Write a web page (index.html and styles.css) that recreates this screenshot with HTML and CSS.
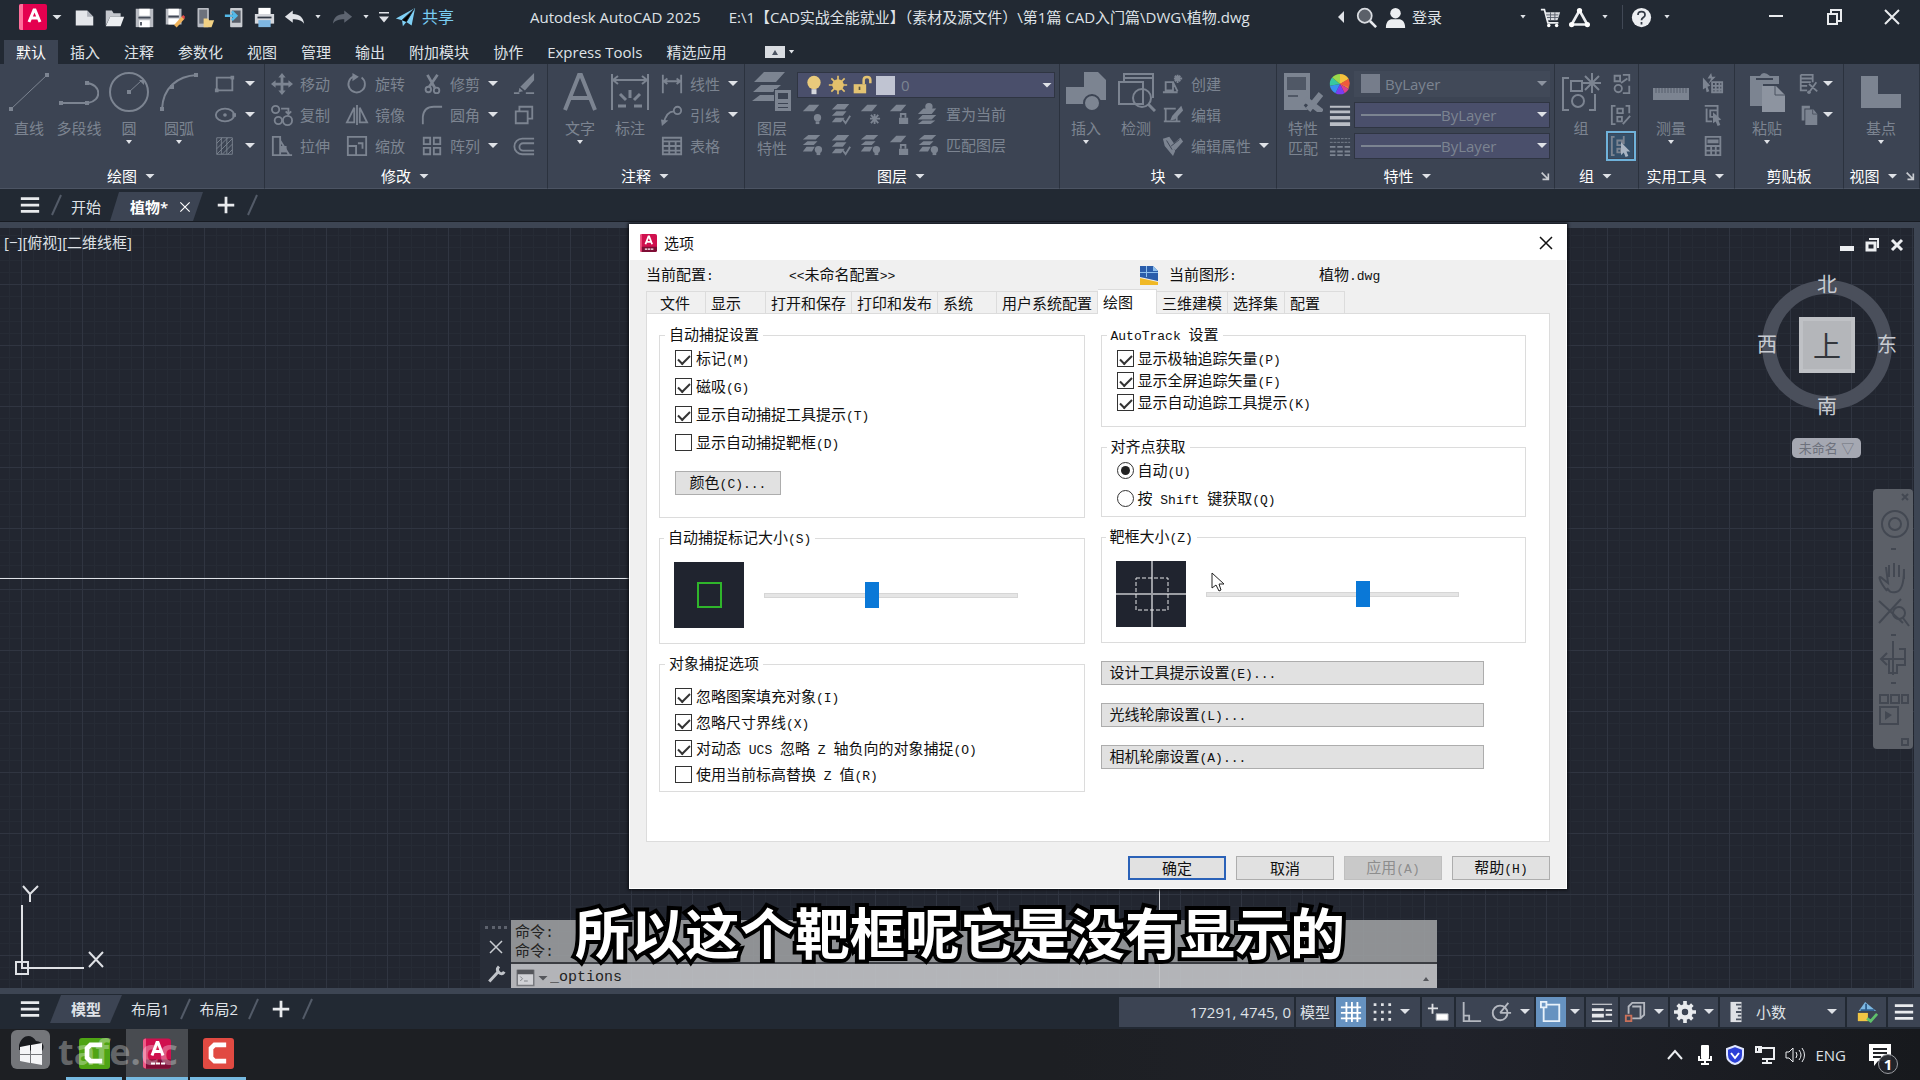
FILE: index.html
```html
<!DOCTYPE html>
<html lang="zh-CN">
<head>
<meta charset="utf-8">
<title>Autodesk AutoCAD 2025</title>
<link rel="stylesheet" href="styles.css">
</head>
<body>
<svg class="defs" aria-hidden="true">
  <defs>
    <symbol id="new" viewBox="0 0 24 24"><path fill="#e4e6ea" d="M2 4h13l7 7v10H2z"/><path fill="#aeb2ba" d="M15 4v7h7z"/></symbol>
    <symbol id="open" viewBox="0 0 24 24"><path fill="#c4c7cd" d="M2 21V4h7l2 3h8v4H7z"/><path fill="#eceef1" d="M7 11h16l-4 11H2z"/></symbol>
    <symbol id="save" viewBox="0 0 24 24"><path fill="#b9bcc3" d="M2 2h20v21H2z"/><path fill="#fff" d="M6 2h12v8H6zM6 15h12v8H6z"/><path stroke="#444b57" stroke-width="2" d="M5 12h14M8 17v4"/></symbol>
    <symbol id="saveas" viewBox="0 0 24 24"><path fill="#b9bcc3" d="M2 2h18v18H2z"/><path fill="#fff" d="M5 2h12v7H5zM5 13h12v7H5z"/><path stroke="#444b57" stroke-width="2" d="M5 11h12"/><path stroke="#f0b35a" stroke-width="4" d="M13 22l9-10"/><path fill="#e64a4a" d="M20 11l3 3 1-3-2-2z"/></symbol>
    <symbol id="mobopen" viewBox="0 0 24 24"><rect x="4" y="1" width="13" height="22" rx="1" fill="#b9bcc3"/><path fill="#6d727c" d="M6 3h9v16H6z"/><path fill="#f2d184" d="M11 13h5l1 2h6l-3 8h-9z"/></symbol>
    <symbol id="mobsave" viewBox="0 0 24 24"><rect x="7" y="1" width="14" height="22" rx="1" fill="#c9ccd1"/><path fill="#585e69" d="M9 4h10v14H9z"/><path stroke="#54b9e8" stroke-width="3" fill="none" d="M1 10h11M9 5l5 5-5 5"/></symbol>
    <symbol id="print" viewBox="0 0 24 24"><path fill="#fff" d="M5 1h14v7H5z"/><path fill="#d5d7dc" d="M1 8h22v11H1z"/><path fill="#7fb7e2" d="M5 15h14v8H5z"/><path stroke="#333a46" stroke-width="2" d="M4 12h16"/></symbol>
    <symbol id="undo" viewBox="0 0 24 24"><path fill="currentColor" d="M1 11l9-7v4c8 0 12 4 13 11-3-4-7-5-13-5v4z"/></symbol>
    <symbol id="redo" viewBox="0 0 24 24"><path fill="currentColor" d="M23 11l-9-7v4C6 8 2 12 1 19c3-4 7-5 13-5v4z"/></symbol>
    <symbol id="plane" viewBox="0 0 24 24"><path fill="#7fd0f5" d="M1 13L23 1l-4 20-6-4-4 5-1-7z"/><path stroke="#222933" d="M8 15L22 2 13 17"/></symbol>
    <symbol id="search" viewBox="0 0 24 24"><circle cx="10" cy="10" r="8" fill="#5b6069" stroke="#d9dce1" stroke-width="2"/><path stroke="#e9ebee" stroke-width="3" d="M16 16l7 7"/></symbol>
    <symbol id="user" viewBox="0 0 24 24"><circle cx="12" cy="7" r="6" fill="#eceef1"/><path fill="#eceef1" d="M1 24c0-8 4-10 7-10h8c3 0 7 2 7 10z"/></symbol>
    <symbol id="cart" viewBox="0 0 24 24"><path fill="#d9dce1" d="M6 6h17l-3 9H9z"/><path fill="none" stroke="#eceef1" stroke-width="2" d="M1 3h4l4 15h12"/><circle cx="10" cy="21" r="2" fill="#fff"/><circle cx="19" cy="21" r="2" fill="#fff"/><path stroke="#525966" d="M7 9h14M8 12h13M12 6v9M17 6v9"/></symbol>
    <symbol id="tri" viewBox="0 0 24 24"><path fill="none" stroke="#eceef1" stroke-width="3" stroke-linejoin="round" d="M12 4L3 20h18z"/><circle cx="12" cy="4" r="3" fill="#fff"/><circle cx="3" cy="20" r="3" fill="#fff"/><circle cx="21" cy="20" r="3" fill="#fff"/></symbol>
    <symbol id="help" viewBox="0 0 24 24"><circle cx="12" cy="12" r="11" fill="#eceef1"/><path fill="none" stroke="#333a46" stroke-width="2" d="M8 9c0-5 8-5 8 0 0 3-4 3-4 6M12 17v3"/></symbol>
    <symbol id="burger" viewBox="0 0 24 24"><path stroke="#e9ebee" stroke-width="3" d="M2 5h20M2 12h20M2 19h20"/></symbol>
    <symbol id="plus" viewBox="0 0 24 24"><path stroke="#e9ebee" stroke-width="3" d="M3 12h18M12 3v18"/></symbol>
    <symbol id="cross" viewBox="0 0 24 24"><path stroke="currentColor" stroke-width="2" d="M4 4l16 16M20 4L4 20"/></symbol>
    <symbol id="slash" viewBox="0 0 12 24"><path stroke="#535b68" stroke-width="2" d="M11 2L2 22"/></symbol>
    <symbol id="launch" viewBox="0 0 12 12"><path fill="none" stroke="#c9ccd1" stroke-width="2" d="M2 2l7 7M3 10h7V3"/></symbol>

    <symbol id="line" viewBox="0 0 40 40"><path stroke="currentColor" d="M2 37L38 3"/><path fill="currentColor" d="M0 35h4v4H0zM36 1h4v4h-4z"/></symbol>
    <symbol id="pline" viewBox="0 0 40 40"><path fill="none" stroke="currentColor" stroke-width="2" d="M1 31h28M27 11c16 1 16 18 2 20"/><path fill="currentColor" d="M0 29h4v4H0zM26 29h4v4h-4zM26 9h4v4h-4z"/></symbol>
    <symbol id="circle" viewBox="0 0 40 40"><circle cx="20" cy="20" r="19" fill="none" stroke="currentColor" stroke-width="2"/><path stroke="currentColor" d="M20 20L32 9"/><path fill="currentColor" d="M18 18h4v4h-4zM30 8h5v5z"/></symbol>
    <symbol id="arc" viewBox="0 0 40 40"><path fill="none" stroke="currentColor" stroke-width="2" d="M3 37C4 16 18 4 38 3"/><path fill="currentColor" d="M1 35h4v4H1zM11 13h4v4h-4zM35 1h4v4h-4z"/></symbol>
    <symbol id="rect" viewBox="0 0 24 24"><path fill="none" stroke="currentColor" stroke-width="2" d="M3 5h17v14H3z"/><path fill="currentColor" d="M1 17h4v4H1zM18 3h4v4h-4z"/></symbol>
    <symbol id="ellipse" viewBox="0 0 24 24"><ellipse cx="12" cy="12" rx="10" ry="7" fill="none" stroke="currentColor" stroke-width="2"/><circle cx="12" cy="12" r="2" fill="currentColor"/><path fill="currentColor" d="M20 10h4v4h-4z"/></symbol>
    <symbol id="hatch" viewBox="0 0 24 24"><path fill="none" stroke="currentColor" d="M3 3h17v18H3zM3 9l6-6M3 15L15 3M3 21L20 4M9 21l11-11M15 21l5-5M8 3v18M14 3v18"/></symbol>
    <symbol id="move" viewBox="0 0 24 24"><path fill="none" stroke="currentColor" stroke-width="3" d="M12 3v18M3 12h18"/><path fill="currentColor" d="M12 0l4 5H8zM12 24l4-5H8zM0 12l5-4v8zM24 12l-5-4v8z"/></symbol>
    <symbol id="rotate" viewBox="0 0 24 24"><path fill="none" stroke="currentColor" stroke-width="2" d="M17 5a9 9 0 1 1-9-1"/><path fill="currentColor" d="M7 0l7 4-7 5z"/></symbol>
    <symbol id="trim" viewBox="0 0 24 24"><path stroke="currentColor" stroke-width="3" d="M7 2l8 14M18 2L9 15"/><g fill="none" stroke="currentColor" stroke-width="2"><circle cx="8" cy="18" r="3"/><circle cx="17" cy="19" r="3"/></g></symbol>
    <symbol id="erase" viewBox="0 0 24 24"><path fill="currentColor" d="M23 0v8L13 19l-5-4zM7 16l4 4-5 1z"/><path stroke="currentColor" stroke-width="2" d="M1 22h6M14 22h9"/></symbol>
    <symbol id="copy" viewBox="0 0 24 24"><g fill="none" stroke="currentColor" stroke-width="2"><circle cx="5" cy="6" r="4"/><circle cx="8" cy="18" r="4"/><circle cx="18" cy="18" r="5"/><path d="M11 5h8v6M16 8l3 3 3-3"/></g></symbol>
    <symbol id="mirror" viewBox="0 0 24 24"><path fill="none" stroke="currentColor" stroke-width="2" d="M9 4L1 20h8zM15 4l8 16h-8zM12 1v22"/></symbol>
    <symbol id="fillet" viewBox="0 0 24 24"><path fill="none" stroke="currentColor" stroke-width="2" d="M2 22V14Q3 3 14 3h9"/></symbol>
    <symbol id="box" viewBox="0 0 24 24"><path fill="none" stroke="currentColor" stroke-width="2" d="M3 8h13v13H3zM7 8V3h14v13h-5"/></symbol>
    <symbol id="stretch" viewBox="0 0 24 24"><path fill="none" stroke="currentColor" stroke-width="2" d="M2 2h8v20H2zM10 6l10 16H10M2 22h21"/><path fill="currentColor" d="M10 12h7v7h-7z"/></symbol>
    <symbol id="scale" viewBox="0 0 24 24"><path fill="none" stroke="currentColor" stroke-width="2" d="M2 2h20v20H2zM2 12h9v10M13 9h5v6"/></symbol>
    <symbol id="array" viewBox="0 0 24 24"><path fill="none" stroke="currentColor" stroke-width="2" d="M3 3h7v7H3zM14 3h7v7h-7zM3 14h7v7H3zM14 14h7v7h-7z"/></symbol>
    <symbol id="offset" viewBox="0 0 24 24"><path fill="none" stroke="currentColor" stroke-width="2" d="M23 4H10a8 8 0 0 0 0 17h13M23 9H11a4 4 0 0 0 0 8h12"/></symbol>
    <symbol id="text" viewBox="0 0 40 40"><path fill="none" stroke="currentColor" stroke-width="4" d="M5 38L19 3h2l14 35M10 26h20"/></symbol>
    <symbol id="dim" viewBox="0 0 40 40"><path fill="none" stroke="currentColor" stroke-width="2" d="M2 2v36M38 2v36M3 8h34M8 4L3 8l5 4M32 4l5 4-5 4"/><path stroke="currentColor" stroke-width="3" d="M20 18v8M10 22l6 6M30 22l-6 6M8 34h8M24 34h8"/></symbol>
    <symbol id="linear" viewBox="0 0 24 24"><path fill="none" stroke="currentColor" stroke-width="2" d="M2 2v20M22 2v20M3 9h18M7 6L3 9l4 3M17 6l4 3-4 3"/></symbol>
    <symbol id="leader" viewBox="0 0 24 24"><g fill="none" stroke="currentColor" stroke-width="2"><path d="M3 21C5 12 8 8 14 8"/><circle cx="18" cy="7" r="4"/></g><path fill="currentColor" d="M0 17l8 1-7 6z"/></symbol>
    <symbol id="table" viewBox="0 0 24 24"><path fill="none" stroke="currentColor" stroke-width="2" d="M2 3h20v18H2zM2 7h20M2 12h20M2 17h20M9 7v14M16 7v14"/></symbol>
    <symbol id="layers" viewBox="0 0 40 40"><path fill="currentColor" d="M12 0h21l-9 10H2zM9 13h20l-8 7H1zM8 23h16v6H0z"/><path fill="#3c4453" d="M22 17h18v23H22z"/><path fill="currentColor" d="M23 18h16v21H23z"/><path fill="#3c4453" d="M26 21h10v6H26zM26 31h10v1H26zM26 35h10v1H26z"/></symbol>
    <symbol id="ly1" viewBox="0 0 24 24"><path fill="currentColor" d="M9 2h11l-6 7H2z"/><circle cx="18" cy="16" r="4" fill="currentColor"/><path fill="currentColor" d="M16 20h4v3h-4z"/></symbol>
    <symbol id="ly2" viewBox="0 0 24 24"><path fill="currentColor" d="M8 1h13l-5 6H2zM7 9h11l-4 5H2zM6 16h10l-4 5H2z"/><path fill="none" stroke="currentColor" stroke-width="2" d="M14 18l3 4 5-8"/></symbol>
    <symbol id="ly3" viewBox="0 0 24 24"><path fill="currentColor" d="M9 2h11l-6 7H2z"/><path stroke="currentColor" stroke-width="2" d="M17 12v11M12 17h11M13 13l8 9M21 13l-8 9"/></symbol>
    <symbol id="ly4" viewBox="0 0 24 24"><path fill="currentColor" d="M9 2h11l-6 7H2zM12 16h10v7H12z"/><path fill="none" stroke="currentColor" stroke-width="2" d="M14 16v-4h5v4"/></symbol>
    <symbol id="ly5" viewBox="0 0 24 24"><path fill="currentColor" d="M7 6h14l-5 6H1zM6 13h15l-5 5H1zM6 19h14l-5 4H1z"/><circle cx="13" cy="4" r="4" fill="currentColor"/></symbol>
    <symbol id="ly6" viewBox="0 0 24 24"><path fill="currentColor" d="M8 1h13l-5 5H2zM7 8h11l-4 4H2zM6 14h9l-3 5H2z"/><circle cx="19" cy="17" r="4" fill="currentColor"/><path fill="currentColor" d="M17 20h4v3h-4z"/></symbol>
    <symbol id="insert" viewBox="0 0 40 40"><path fill="currentColor" d="M18 0h14l8 8v20H18zM0 15h26v17H0z"/><circle cx="26" cy="31" r="8" fill="#7d8592" stroke="#3c4453" stroke-width="2"/></symbol>
    <symbol id="detect" viewBox="0 0 40 40"><path fill="none" stroke="currentColor" stroke-width="2" d="M8 9V2h29v24M3 10h24v22H3zM8 6h29"/><circle cx="26" cy="26" r="9" fill="none" stroke="currentColor" stroke-width="2"/><path stroke="currentColor" stroke-width="3" d="M32 32l7 7"/></symbol>
    <symbol id="create" viewBox="0 0 24 24"><path fill="none" stroke="currentColor" stroke-width="2" d="M4 10h8v9H4zM1 21h16M12 10l5 10M17 2v9M13 6h9M14 3l6 6M20 3l-6 6"/></symbol>
    <symbol id="edit" viewBox="0 0 24 24"><path fill="none" stroke="currentColor" stroke-width="2" d="M2 5h13M4 5v14M2 19h18M16 12v7"/><path fill="currentColor" d="M21 2l2 5-9 10-5 1 2-5z"/></symbol>
    <symbol id="attr" viewBox="0 0 24 24"><path fill="currentColor" d="M1 4l7-2 5 7 7-6 3 4-8 9-3 7-9-11z"/><path stroke="#3c4453" d="M5 6l6 10M10 12l9-7M14 16l5 6"/></symbol>
    <symbol id="match" viewBox="0 0 40 40"><path fill="currentColor" d="M1 1h26v37H1z"/><path fill="#505866" d="M4 5h19v13H4zM5 23h10v2H5z"/><path stroke="#3c4453" stroke-width="7" d="M23 36l16-14"/><path stroke="currentColor" stroke-width="6" d="M22 27l17 13M25 38l13-16"/></symbol>
    <symbol id="wheel" viewBox="0 0 24 24"><path fill="#f6c23c" d="M12 12L12 1A11 11 0 0 1 21.500 6.500z"/><path fill="#ef7a3a" d="M12 12L21.500 6.500V17.500z"/><path fill="#dc3f8e" d="M12 12L21.500 17.500A11 11 0 0 1 17 22z"/><path fill="#7a3df0" d="M12 12L17 22A11 11 0 0 1 7 22z"/><path fill="#3a8ff0" d="M12 12L7 22A11 11 0 0 1 1 14z"/><path fill="#38c8a0" d="M12 12L1 14A11 11 0 0 1 3.500 5z"/><path fill="#9bd84a" d="M12 12L3.500 5A11 11 0 0 1 12 1z"/><path fill="#ee5a3c" d="M12 12L21.500 6.500A11 11 0 0 1 22 15z"/></symbol>
    <symbol id="lw" viewBox="0 0 24 24"><path fill="#b9bdc5" d="M1 2h22v2H1zM1 7h22v3H1zM1 13h22v4H1zM1 20h22v4H1z"/></symbol>
    <symbol id="lt" viewBox="0 0 24 24"><path stroke="currentColor" d="M1 4h22M1 8h22" stroke-dasharray="3 1"/><path stroke="currentColor" stroke-width="2" d="M1 13h22M1 18h22M1 22h22" stroke-dasharray="6 2"/></symbol>
    <symbol id="group" viewBox="0 0 40 40"><g fill="none" stroke="currentColor" stroke-width="2"><path d="M8 6H2v32h6M28 38h6V22M10 9h11v10H10z"/><circle cx="17" cy="29" r="6"/><path d="M31 1v20M21 11h19M24 4l14 14M38 4L24 18"/></g></symbol>
    <symbol id="ungroup" viewBox="0 0 24 24"><g fill="none" stroke="currentColor" stroke-width="2"><path d="M14 2h7v7M21 14v8h-7M5 3h6v6H5z"/><circle cx="9" cy="17" r="4"/><path d="M12 11l7-5"/></g></symbol>
    <symbol id="grpedit" viewBox="0 0 24 24"><path fill="none" stroke="currentColor" stroke-width="2" d="M6 2H2v20h4M17 2h4v8M8 5h6v5H8zM8 14h5v5H8zM14 22l8-9"/></symbol>
    <symbol id="grpsel" viewBox="0 0 24 24"><path fill="none" stroke="currentColor" stroke-width="2" d="M5 2H2v20h3M8 6h5v5H8zM8 15h4v4H8zM15 1v9"/><path fill="#a9b4c2" d="M12 8l10 10h-4l2 5-3 1-2-5-3 3z"/></symbol>
    <symbol id="measure" viewBox="0 0 40 40"><path fill="currentColor" d="M2 16h36v12H2z"/><path stroke="#565e6c" d="M5 16v5M8 16v5M11 16v5M14 16v5M17 16v5M20 16v5M23 16v5M26 16v5M29 16v5M32 16v5M35 16v5"/></symbol>
    <symbol id="qselect" viewBox="0 0 24 24"><path fill="currentColor" d="M1 5l8 9-3 1 2 5-3 1-1-5-3 2zM10 0L6 6h4l-3 6 8-8h-4z"/><path fill="none" stroke="currentColor" stroke-width="2" d="M11 10h11v11H11zM11 14h11M11 18h11M15 10v11M19 10v11"/></symbol>
    <symbol id="selall" viewBox="0 0 24 24"><path fill="none" stroke="currentColor" stroke-width="2" d="M3 2h14v9M5 5v14h6M9 7h8v7H9z"/><path fill="currentColor" d="M12 9l9 8-3 1 2 5-3 1-2-5-3 2z"/></symbol>
    <symbol id="calc" viewBox="0 0 24 24"><path fill="none" stroke="currentColor" stroke-width="2" d="M4 2h16v20H4zM7 6h10v2H7zM4 12h16M4 17h16M10 12v10M15 12v10"/></symbol>
    <symbol id="paste" viewBox="0 0 40 40"><path fill="currentColor" d="M3 4h10q3-6 10 0h9v8H16v22H3z"/><path fill="#3c4453" d="M9 6h17v2H9z"/><path fill="#8d94a0" d="M15 14h14l9 9v17H15z"/><path stroke="#4b5361" fill="none" d="M28 14v9h10"/></symbol>
    <symbol id="cut" viewBox="0 0 24 24"><path fill="none" stroke="currentColor" stroke-width="2" d="M3 2h13v8M3 2v17h7M3 6h13M3 10h11M3 14h7M12 12l9 8M20 10l-7 10"/><circle cx="12" cy="21" r="2" fill="currentColor"/></symbol>
    <symbol id="copyclip" viewBox="0 0 24 24"><path fill="currentColor" d="M4 2h9v3H7v13H4zM8 6h9l4 5v12H8z"/><path fill="none" stroke="#4b5361" d="M16 6v5h5"/></symbol>
    <symbol id="base" viewBox="0 0 40 40"><path fill="currentColor" d="M0 4h17v18h23v14H0z"/></symbol>

    <symbol id="bulb" viewBox="0 0 24 24"><circle cx="12" cy="9" r="8" fill="#e9ca7c"/><path fill="#d6d8dd" d="M9 17h6v6H9z"/></symbol>
    <symbol id="sun" viewBox="0 0 24 24"><circle cx="12" cy="12" r="7" fill="#e3c06c"/><path stroke="#e3c06c" stroke-width="2" d="M12 1v22M1 12h22M4 4l16 16M20 4L4 20"/></symbol>
    <symbol id="unlock" viewBox="0 0 24 24"><path fill="#e3c373" d="M2 11h15v11H2z"/><path fill="none" stroke="#e3c373" stroke-width="3" d="M14 11V6c0-5 8-5 8 0v4"/><path stroke="#5b5540" stroke-width="2" d="M9 14v4"/></symbol>
    <symbol id="wrench" viewBox="0 0 24 24"><path stroke="#c0c3c9" stroke-width="4" d="M3 22L15 9"/><path fill="none" stroke="#c0c3c9" stroke-width="4" d="M16 2q-4 4 0 8t7-1"/></symbol>
    <symbol id="prompt" viewBox="0 0 24 24"><path fill="#d0d1d5" stroke="#77797e" stroke-width="2" d="M1 2h22v20H1z"/><path fill="#54565b" d="M1 1h22v6H1z"/><path fill="none" stroke="#66686e" d="M5 10l3 3-3 3M10 16h5"/></symbol>
    <symbol id="grid" viewBox="0 0 24 24"><path stroke="#fff" stroke-width="2" d="M7 1v22M13 1v22M19 1v22M1 7h22M1 13h22M1 19h22"/></symbol>
    <symbol id="snap" viewBox="0 0 24 24"><path stroke="#dfe1e5" stroke-width="3" stroke-dasharray="3 5" d="M4 4h19M4 12h19M4 20h19"/></symbol>
    <symbol id="dyn" viewBox="0 0 24 24"><path stroke="#dfe1e5" stroke-width="2" d="M6 3v11M1 8h11"/><path fill="#fff" stroke="#aeb2ba" d="M10 14h13v7H10z"/></symbol>
    <symbol id="ortho" viewBox="0 0 24 24"><path fill="none" stroke="#b4b8c0" stroke-width="2" d="M4 1v21h19M4 16h6v6"/></symbol>
    <symbol id="polar" viewBox="0 0 24 24"><circle cx="11" cy="13" r="8" fill="none" stroke="#b4b8c0" stroke-width="2"/><path stroke="#b4b8c0" stroke-width="2" d="M11 13L20 2M11 13h12"/></symbol>
    <symbol id="osnap" viewBox="0 0 24 24"><path fill="none" stroke="#e8f1fa" stroke-width="2" d="M4 4h17v18H4z"/><path fill="#6e99c6" stroke="#e8f1fa" stroke-width="2" d="M1 1h6v6H1z"/></symbol>
    <symbol id="lwt" viewBox="0 0 24 24"><path fill="#e6e8eb" d="M1 3h22v1H1zM1 8h13v3H1zM16 9h7v2h-7zM1 14h13v4H1zM16 14h7v2h-7zM1 21h22v2H1z"/></symbol>
    <symbol id="cyc" viewBox="0 0 24 24"><path fill="none" stroke="#b4b8c0" stroke-width="2" d="M5 14V6l4-4h13v13l-4 4H9M9 6h9v13"/><path fill="#3c4453" stroke="#c9705a" stroke-width="2" d="M2 16h6v6H2z"/></symbol>
    <symbol id="gear" viewBox="0 0 24 24"><circle cx="12" cy="12" r="6" fill="none" stroke="#e9ebee" stroke-width="5"/><path stroke="#e9ebee" stroke-width="4" d="M12 0v5M12 19v5M0 12h5M19 12h5M4 4l3 3M17 17l3 3M20 4l-3 3M7 17l-3 3"/><circle cx="12" cy="12" r="3" fill="#3c4453"/></symbol>
    <symbol id="ruler" viewBox="0 0 24 24"><path fill="#dfe1e5" d="M6 1h12v22H6z"/><path stroke="#4b5361" stroke-width="2" d="M12 4h6M14 8h4M12 12h6M14 16h4M12 20h6"/></symbol>
    <symbol id="perf" viewBox="0 0 24 24"><path fill="#7db8e2" d="M10 1l12 10H3z"/><path stroke="#2f5f8d" stroke-width="2" d="M11 3v8M5 10h15"/><path fill="#f1c644" d="M2 13h11v9H2z"/><path fill="none" stroke="#5fc06b" stroke-width="3" d="M12 19l4 3 7-8"/></symbol>
    <symbol id="camt" viewBox="0 0 24 24"><path fill="none" stroke="#fff" stroke-width="4" d="M19 5H9L6 8v8l3 3h10"/></symbol>
    <symbol id="acad" viewBox="0 0 28 30"><rect width="28" height="30" rx="3" fill="#d0104e"/><path fill="#ef5a86" d="M0 3q0-3 3-3v30q-3 0-3-3z"/><path fill="#7e0d35" d="M3 21h25v6q0 3-3 3H3z"/><path fill="none" stroke="#fff" stroke-width="3" d="M9 17l5-13h1l5 13M11 13h7"/><path stroke="#fff" stroke-width="2" d="M8 25h4M13 25h4M18 25h4"/></symbol>
  </defs>
</svg>

<div class="app">
  <header class="titlebar">
    <div class="quick">
      <button class="logo" aria-label="A"><svg viewBox="0 0 28 26"><rect width="28" height="26" rx="2" fill="#e4004f"/><path fill="#ff6f9b" d="M0 2q0-2 2-2h2v26H2q-2 0-2-2z"/><path fill="none" stroke="#fff" stroke-width="3" d="M10 18l5-12h1l5 12M12 14h8"/></svg></button>
      <i class="caret"></i>
      <button aria-label="新建"><svg><use href="#new"/></svg></button>
      <button aria-label="打开"><svg><use href="#open"/></svg></button>
      <button aria-label="保存"><svg><use href="#save"/></svg></button>
      <button aria-label="另存为"><svg><use href="#saveas"/></svg></button>
      <button aria-label="从移动端打开"><svg><use href="#mobopen"/></svg></button>
      <button aria-label="保存到移动端"><svg><use href="#mobsave"/></svg></button>
      <button aria-label="打印"><svg><use href="#print"/></svg></button>
      <button aria-label="放弃"><svg><use href="#undo"/></svg></button>
      <i class="caret sm"></i>
      <button class="redo" aria-label="重做"><svg><use href="#redo"/></svg></button>
      <i class="caret sm"></i>
      <i class="caret bar"></i>
      <button class="share"><svg><use href="#plane"/></svg>共享</button>
    </div>
    <div class="doc-title"><span>Autodesk AutoCAD 2025</span><span>E:\1【CAD实战全能就业】（素材及源文件）\第1篇 CAD入门篇\DWG\植物.dwg</span></div>
    <div class="account">
      <i class="caret left"></i>
      <button aria-label="搜索"><svg><use href="#search"/></svg></button>
      <button class="login"><svg><use href="#user"/></svg>登录</button>
      <i class="caret sm far"></i>
      <button aria-label="购物车"><svg><use href="#cart"/></svg></button>
      <button aria-label="应用"><svg><use href="#tri"/></svg></button>
      <i class="caret sm"></i>
      <i class="vsep"></i>
      <button aria-label="帮助"><svg><use href="#help"/></svg></button>
      <i class="caret sm"></i>
    </div>
    <div class="winbtns">
      <button aria-label="最小化"><svg viewBox="0 0 16 16"><path stroke="#e9ebee" d="M1 7h14" stroke-width="2"/></svg></button>
      <button aria-label="还原"><svg viewBox="0 0 16 16"><path fill="none" stroke="#e9ebee" stroke-width="2" d="M2 5h9v10H2zM5 5V1h10v11h-4"/></svg></button>
      <button aria-label="关闭"><svg viewBox="0 0 16 16"><path stroke="#e9ebee" stroke-width="2" d="M1 1l14 14M15 1L1 15"/></svg></button>
    </div>
  </header>

  <nav class="ribbon-tabs">
    <button class="on">默认</button><button>插入</button><button>注释</button><button>参数化</button><button>视图</button><button>管理</button><button>输出</button><button>附加模块</button><button>协作</button><button>Express Tools</button><button>精选应用</button>
    <button class="collapse" aria-label="最小化功能区"><svg viewBox="0 0 20 12"><path fill="#d9dce1" d="M0 0h20v12H0z"/><path fill="#4b5361" d="M10 4l3 5H7z"/></svg><i class="caret sm"></i></button>
  </nav>

  <section class="ribbon">
    <div class="panel">
      <div class="tools p-draw">
        <button class="big"><svg><use href="#line"/></svg><span>直线</span></button>
        <button class="big"><svg><use href="#pline"/></svg><span>多段线</span></button>
        <button class="big"><svg><use href="#circle"/></svg><span>圆</span><i class="caret sm"></i></button>
        <button class="big"><svg><use href="#arc"/></svg><span>圆弧</span><i class="caret sm"></i></button>
        <div class="rows">
          <button class="small" aria-label="矩形"><svg><use href="#rect"/></svg><i class="caret"></i></button>
          <button class="small" aria-label="椭圆"><svg><use href="#ellipse"/></svg><i class="caret"></i></button>
          <button class="small" aria-label="图案填充"><svg><use href="#hatch"/></svg><i class="caret"></i></button>
        </div>
      </div>
      <div class="ptitle"><button>绘图<i class="caret"></i></button></div>
    </div>
    <div class="panel">
      <div class="tools p-mod">
        <div class="rows">
          <button class="small"><svg><use href="#move"/></svg>移动</button>
          <button class="small"><svg><use href="#copy"/></svg>复制</button>
          <button class="small"><svg><use href="#stretch"/></svg>拉伸</button>
        </div>
        <div class="rows">
          <button class="small"><svg><use href="#rotate"/></svg>旋转</button>
          <button class="small"><svg><use href="#mirror"/></svg>镜像</button>
          <button class="small"><svg><use href="#scale"/></svg>缩放</button>
        </div>
        <div class="rows">
          <button class="small"><svg><use href="#trim"/></svg>修剪<i class="caret"></i></button>
          <button class="small"><svg><use href="#fillet"/></svg>圆角<i class="caret"></i></button>
          <button class="small"><svg><use href="#array"/></svg>阵列<i class="caret"></i></button>
        </div>
        <div class="rows">
          <button class="small" aria-label="删除"><svg><use href="#erase"/></svg></button>
          <button class="small" aria-label="分解"><svg><use href="#box"/></svg></button>
          <button class="small" aria-label="偏移"><svg><use href="#offset"/></svg></button>
        </div>
      </div>
      <div class="ptitle"><button>修改<i class="caret"></i></button></div>
    </div>
    <div class="panel">
      <div class="tools p-ann">
        <button class="big"><svg><use href="#text"/></svg><span>文字</span><i class="caret sm"></i></button>
        <button class="big"><svg><use href="#dim"/></svg><span>标注</span></button>
        <div class="rows">
          <button class="small"><svg><use href="#linear"/></svg>线性<i class="caret"></i></button>
          <button class="small"><svg><use href="#leader"/></svg>引线<i class="caret"></i></button>
          <button class="small"><svg><use href="#table"/></svg>表格</button>
        </div>
      </div>
      <div class="ptitle"><button>注释<i class="caret"></i></button></div>
    </div>
    <div class="panel">
      <div class="tools p-lay">
        <button class="big"><svg><use href="#layers"/></svg><span>图层<br>特性</span></button>
        <div class="layer-col">
          <div class="combo layer"><svg><use href="#bulb"/></svg><svg><use href="#sun"/></svg><svg><use href="#unlock"/></svg><i class="swatch"></i><select aria-label="图层"><option>0</option></select><i class="caret"></i></div>
          <div class="iconrow">
            <button aria-label="关"><svg><use href="#ly1"/></svg></button><button aria-label="隔离"><svg><use href="#ly2"/></svg></button><button aria-label="冻结"><svg><use href="#ly3"/></svg></button><button aria-label="锁定"><svg><use href="#ly4"/></svg></button><button class="small"><svg><use href="#ly5"/></svg>置为当前</button>
          </div>
          <div class="iconrow">
            <button aria-label="打开所有图层"><svg><use href="#ly6"/></svg></button><button aria-label="取消隔离"><svg><use href="#ly2"/></svg></button><button aria-label="解冻"><svg><use href="#ly6"/></svg></button><button aria-label="解锁"><svg><use href="#ly4"/></svg></button><button class="small"><svg><use href="#ly6"/></svg>匹配图层</button>
          </div>
        </div>
      </div>
      <div class="ptitle"><button>图层<i class="caret"></i></button></div>
    </div>
    <div class="panel">
      <div class="tools p-blk">
        <button class="big"><svg><use href="#insert"/></svg><span>插入</span><i class="caret sm"></i></button>
        <button class="big"><svg><use href="#detect"/></svg><span>检测</span></button>
        <div class="rows">
          <button class="small"><svg><use href="#create"/></svg>创建</button>
          <button class="small"><svg><use href="#edit"/></svg>编辑</button>
          <button class="small"><svg><use href="#attr"/></svg>编辑属性<i class="caret"></i></button>
        </div>
      </div>
      <div class="ptitle"><button>块<i class="caret"></i></button></div>
    </div>
    <div class="panel">
      <div class="tools p-prop">
        <button class="big"><svg><use href="#match"/></svg><span>特性<br>匹配</span></button>
        <div class="props">
          <svg><use href="#wheel"/></svg><div class="combo flat"><i class="swatch"></i><select aria-label="颜色"><option>ByLayer</option></select><i class="caret"></i></div>
          <svg><use href="#lw"/></svg><div class="combo"><i class="rule"></i><select aria-label="线宽"><option>ByLayer</option></select><i class="caret"></i></div>
          <svg><use href="#lt"/></svg><div class="combo"><i class="rule"></i><select aria-label="线型"><option>ByLayer</option></select><i class="caret"></i></div>
        </div>
      </div>
      <div class="ptitle"><button>特性<i class="caret"></i></button><svg><use href="#launch"/></svg></div>
    </div>
    <div class="panel">
      <div class="tools p-grp">
        <button class="big"><svg><use href="#group"/></svg><span>组</span></button>
        <div class="rows">
          <button class="small" aria-label="解除编组"><svg><use href="#ungroup"/></svg></button>
          <button class="small" aria-label="组编辑"><svg><use href="#grpedit"/></svg></button>
          <button class="small active" aria-label="启用组选择"><svg><use href="#grpsel"/></svg></button>
        </div>
      </div>
      <div class="ptitle"><button>组<i class="caret"></i></button></div>
    </div>
    <div class="panel">
      <div class="tools p-util">
        <button class="big"><svg><use href="#measure"/></svg><span>测量</span><i class="caret sm"></i></button>
        <div class="rows">
          <button class="small" aria-label="快速选择"><svg><use href="#qselect"/></svg></button>
          <button class="small" aria-label="全部选择"><svg><use href="#selall"/></svg></button>
          <button class="small" aria-label="计算器"><svg><use href="#calc"/></svg></button>
        </div>
      </div>
      <div class="ptitle"><button>实用工具<i class="caret"></i></button></div>
    </div>
    <div class="panel">
      <div class="tools p-clip">
        <button class="big"><svg><use href="#paste"/></svg><span>粘贴</span><i class="caret sm"></i></button>
        <div class="rows">
          <button class="small" aria-label="剪切"><svg><use href="#cut"/></svg><i class="caret"></i></button>
          <button class="small" aria-label="复制"><svg><use href="#copyclip"/></svg><i class="caret"></i></button>
        </div>
      </div>
      <div class="ptitle"><button>剪贴板</button></div>
    </div>
    <div class="panel">
      <div class="tools p-view">
        <button class="big"><svg><use href="#base"/></svg><span>基点</span><i class="caret sm"></i></button>
      </div>
      <div class="ptitle"><button>视图<i class="caret"></i></button><svg><use href="#launch"/></svg></div>
    </div>
  </section>

  <nav class="filetabs">
    <button class="sq" aria-label="菜单"><svg><use href="#burger"/></svg></button>
    <svg class="slash"><use href="#slash"/></svg>
    <button class="tab">开始</button>
    <button class="tab on">植物*<svg><use href="#cross"/></svg></button>
    <button class="sq" aria-label="新建选项卡"><svg><use href="#plus"/></svg></button>
    <svg class="slash"><use href="#slash"/></svg>
  </nav>

  <main class="canvas">
    <div class="vp-label">[−][俯视][二维线框]</div>
    <i class="hair-h"></i><i class="hair-v"></i>
    <div class="vp-btns">
      <button aria-label="最小化视口"><svg viewBox="0 0 16 16"><path fill="#eceef1" d="M1 9h14v5H1z"/></svg></button>
      <button aria-label="还原视口"><svg viewBox="0 0 16 16"><path fill="none" stroke="#eceef1" stroke-width="3" d="M3 6h8v7H3z"/><path fill="none" stroke="#eceef1" stroke-width="2" d="M5 2h9v9"/></svg></button>
      <button aria-label="关闭视口"><svg viewBox="0 0 16 16"><path stroke="#eceef1" stroke-width="3" d="M3 3l10 10M13 3L3 13"/></svg></button>
    </div>
    <div class="viewcube">
      <i class="ring"></i><span class="n">北</span><span class="s">南</span><span class="w">西</span><span class="e">东</span>
      <button class="top">上</button>
    </div>
    <button class="wcs">未命名 ▽</button>
    <div class="navbar">
      <svg viewBox="0 0 40 260"><g fill="none" stroke="#434852" stroke-width="2"><path d="M29 5l6 6M35 5l-6 6"/><circle cx="22" cy="35" r="13"/><circle cx="22" cy="35" r="6"/><path d="M18 60h5M14 102C6 92 4 84 10 90l5 4-2-16M16 88V76M21 88V74M26 88V76M31 90V80c0 14-2 22-8 23s-7-1-9-4M6 112l24 22M6 134l22-24"/><circle cx="26" cy="124" r="6"/><path d="M30 129l6 8M18 146h5M20 152v34M8 170h24M14 164l-6 6 6 6M26 160h6v16h-8v8h-8v-14M18 194h5M7 206h8v8H7zM18 206h8v8h-8zM29 206h6v8h-6zM7 218h18v17H7z"/><path d="M29 250h6v6h-6z"/></g><path fill="#434852" d="M12 222l7 4-7 5z"/></svg>
    </div>
    <svg class="ucs" viewBox="0 0 92 94"><path fill="none" stroke="#dfe1e5" stroke-width="2" d="M8 21v63h62M2 78h12v12H2zM9 2l7 8v8M24 2l-8 8M75 68l14 15M89 68L75 83"/></svg>
    <div class="cmd">
      <div class="cmd-side"><i class="dots"></i><button aria-label="关闭"><svg><use href="#cross"/></svg></button><button aria-label="自定义"><svg><use href="#wrench"/></svg></button></div>
      <div class="cmd-body">
        <div class="cmd-hist"><p>命令:</p><p>命令:</p></div>
        <label class="cmd-in"><svg><use href="#prompt"/></svg><i class="caret dark"></i><input type="text" value="_options" aria-label="命令"><i class="caret dark up"></i></label>
      </div>
    </div>
  </main>

  <footer class="status">
    <button class="sq" aria-label="菜单"><svg><use href="#burger"/></svg></button>
    <button class="tab on">模型</button>
    <button class="tab">布局1</button><svg class="slash"><use href="#slash"/></svg>
    <button class="tab">布局2</button><svg class="slash"><use href="#slash"/></svg>
    <button class="sq" aria-label="新建布局"><svg><use href="#plus"/></svg></button><svg class="slash"><use href="#slash"/></svg>
    <div class="tray">
      <span class="seg coord">17291, 4745, 0</span>
      <button class="seg">模型</button>
      <div class="seg snapseg"><button class="hl" aria-label="栅格"><svg><use href="#grid"/></svg></button><button aria-label="捕捉"><svg><use href="#snap"/></svg></button><i class="caret"></i></div>
      <button class="seg" aria-label="动态输入"><svg><use href="#dyn"/></svg></button>
      <div class="seg"><button aria-label="正交"><svg><use href="#ortho"/></svg></button><button aria-label="极轴"><svg><use href="#polar"/></svg></button><i class="caret"></i></div>
      <div class="seg"><button class="hl" aria-label="对象捕捉"><svg><use href="#osnap"/></svg></button><i class="caret"></i></div>
      <button class="seg" aria-label="线宽"><svg><use href="#lwt"/></svg></button>
      <div class="seg"><button aria-label="选择循环"><svg><use href="#cyc"/></svg></button><i class="caret"></i></div>
      <div class="seg"><button aria-label="切换工作空间"><svg><use href="#gear"/></svg></button><i class="caret"></i></div>
      <div class="seg units"><svg><use href="#ruler"/></svg><select aria-label="单位"><option>小数</option></select><i class="caret"></i></div>
      <button class="seg perf" aria-label="硬件加速"><svg><use href="#perf"/></svg></button>
      <button class="seg" aria-label="自定义"><svg><use href="#burger"/></svg></button>
    </div>
  </footer>

  <footer class="taskbar">
    <button class="start" aria-label="开始"><svg viewBox="0 0 39 39"><rect width="39" height="39" rx="6" fill="#74767a"/><path fill="#191b1f" d="M8 15c3-10 12-12 17-4 8 1 9 6 6 10L8 20z"/><path fill="#f4f5f7" d="M9 17l10-2v9H9zM20 15l11-2v11H20zM9 25h10v8l-10-2zM20 25h11v10l-11-2z"/></svg></button>
    <button class="task" aria-label="Camtasia"><i class="cam green"><svg><use href="#camt"/></svg></i></button>
    <button class="task on" aria-label="AutoCAD"><svg><use href="#acad"/></svg></button>
    <button class="task" aria-label="Camtasia 录制"><i class="cam red"><svg><use href="#camt"/></svg></i></button>
    <div class="systray">
      <svg viewBox="0 0 20 20"><path fill="none" stroke="#eceef1" stroke-width="2" d="M3 14l7-8 7 8"/></svg>
      <svg viewBox="0 0 20 20"><rect x="6" y="0" width="8" height="14" rx="1" fill="#fff"/><path fill="none" stroke="#fff" stroke-width="2" d="M4 11v4h12v-4M10 15v4M6 19h8"/></svg>
      <svg viewBox="0 0 20 20"><path fill="#2b3fd6" stroke="#dfe6ff" stroke-width="2" d="M10 1l8 3v6c0 5-4 8-8 9-4-1-8-4-8-9V4z"/><path fill="none" stroke="#fff" stroke-width="2" d="M6 8l4 5 4-5"/></svg>
      <svg viewBox="0 0 20 20"><path fill="none" stroke="#eceef1" stroke-width="2" d="M4 7V3h15v11H7M12 14v4M7 18h10M1 2h5v5H1z"/></svg>
      <svg viewBox="0 0 20 20"><path fill="none" stroke="#eceef1" d="M1 7h3l4-4v14l-4-4H1zM11 7q2 3 0 6M14 5q4 5 0 10M17 3q5 7 0 14"/></svg>
      <span>ENG</span>
      <button class="notes" aria-label="通知"><svg viewBox="0 0 24 24"><path fill="#fff" d="M1 1h22v17H10l-4 5v-5H1z"/><path stroke="#222428" stroke-width="2" d="M5 6h14M5 10h14M5 14h8"/></svg><b>1</b></button>
    </div>
    <div class="mark">tafe.cc</div>
  </footer>

  <form class="dialog">
    <div class="d-title"><svg><use href="#acad"/></svg><h1>选项</h1><button type="button" aria-label="关闭"><svg><use href="#cross"/></svg></button></div>
    <div class="d-body">
      <div class="d-info">
        <span>当前配置<tt>:</tt></span><span><tt>&lt;&lt;</tt>未命名配置<tt>&gt;&gt;</tt></span>
        <svg viewBox="0 0 18 19"><path fill="#2a5dab" d="M0 0h13l5 5v10L0 11z"/><path fill="#8ec0ee" d="M0 6h18v1H0zM6 0h1v11H6zM13 0v5h5z"/><path fill="#f0b927" d="M0 12l18 4v3H0z"/></svg>
        <span>当前图形<tt>:</tt></span><span>植物<tt>.dwg</tt></span>
      </div>
      <div class="d-tabs"><button type="button">文件</button><button type="button">显示</button><button type="button">打开和保存</button><button type="button">打印和发布</button><button type="button">系统</button><button type="button">用户系统配置</button><button type="button" class="on">绘图</button><button type="button">三维建模</button><button type="button">选择集</button><button type="button">配置</button></div>
      <div class="d-page">
        <div class="col">
          <fieldset class="r28 snapset"><legend>自动捕捉设置</legend>
            <label><input type="checkbox" checked>标记<tt>(M)</tt></label>
            <label><input type="checkbox" checked>磁吸<tt>(G)</tt></label>
            <label><input type="checkbox" checked>显示自动捕捉工具提示<tt>(T)</tt></label>
            <label><input type="checkbox">显示自动捕捉靶框<tt>(D)</tt></label>
            <button type="button" class="btn color">颜色<tt>(C)...</tt></button>
          </fieldset>
          <fieldset class="slide"><legend>自动捕捉标记大小<tt>(S)</tt></legend>
            <svg viewBox="0 0 70 66"><path fill="#20242f" d="M0 0h70v66H0z"/><path fill="none" stroke="#2fb52b" stroke-width="2" d="M24 21h23v24H24z"/></svg>
            <input type="range" min="0" max="100" value="42" aria-label="自动捕捉标记大小">
          </fieldset>
          <fieldset class="r26"><legend>对象捕捉选项</legend>
            <label><input type="checkbox" checked>忽略图案填充对象<tt>(I)</tt></label>
            <label><input type="checkbox" checked>忽略尺寸界线<tt>(X)</tt></label>
            <label><input type="checkbox" checked>对动态<tt> UCS </tt>忽略<tt> Z </tt>轴负向的对象捕捉<tt>(O)</tt></label>
            <label><input type="checkbox">使用当前标高替换<tt> Z </tt>值<tt>(R)</tt></label>
          </fieldset>
        </div>
        <div class="col">
          <fieldset class="r22"><legend><tt>AutoTrack </tt>设置</legend>
            <label><input type="checkbox" checked>显示极轴追踪矢量<tt>(P)</tt></label>
            <label><input type="checkbox" checked>显示全屏追踪矢量<tt>(F)</tt></label>
            <label><input type="checkbox" checked>显示自动追踪工具提示<tt>(K)</tt></label>
          </fieldset>
          <fieldset class="r28 radios"><legend>对齐点获取</legend>
            <label><input type="radio" name="acq" checked>自动<tt>(U)</tt></label>
            <label><input type="radio" name="acq">按<tt> Shift </tt>键获取<tt>(Q)</tt></label>
          </fieldset>
          <fieldset class="slide"><legend>靶框大小<tt>(Z)</tt></legend>
            <svg viewBox="0 0 70 66"><path fill="#20242f" d="M0 0h70v66H0z"/><path stroke="#9b9da3" stroke-width="2" d="M0 33h70M36 0v66"/><path fill="none" stroke="#e4e5e8" stroke-dasharray="4 2" d="M20 17h32v32H20z"/></svg>
            <input type="range" min="0" max="100" value="63" aria-label="靶框大小">
          </fieldset>
          <div class="links">
            <button type="button" class="btn">设计工具提示设置<tt>(E)...</tt></button>
            <button type="button" class="btn">光线轮廓设置<tt>(L)...</tt></button>
            <button type="button" class="btn">相机轮廓设置<tt>(A)...</tt></button>
          </div>
        </div>
      </div>
      <div class="d-foot"><button type="button" class="btn ok">确定</button><button type="button" class="btn">取消</button><button type="button" class="btn" disabled>应用<tt>(A)</tt></button><button type="button" class="btn">帮助<tt>(H)</tt></button></div>
    </div>
  </form>
  <svg class="cursor" viewBox="0 0 14 20"><path fill="#fff" stroke="#222" d="M1 1v15l4-3 3 6 2-1-2-6h5z"/></svg>
  <p class="subtitle">所以这个靶框呢它是没有显示的</p>
</div>
</body>
</html>
```
FILE: styles.css
```css
* { box-sizing: border-box; }
body {
  margin: 0;
  background: #222933;
  color: #dfe2e7;
  font: 15px/20px "Open Sans", "Noto Sans CJK SC", sans-serif;
}
button, select, input { font: inherit; color: inherit; margin: 0; }
button { background: none; border: 0; padding: 0; white-space: nowrap; }
p { margin: 0; }
.defs { position: absolute; width: 0; height: 0; }
svg { display: block; flex: none; }
.app { position: relative; display: flex; flex-direction: column; min-height: 100vh; overflow: hidden; }

.caret {
  display: inline-block; flex: none; width: 14px; height: 5px;
  background: #dfe2e7; clip-path: polygon(2px 0, 12px 0, 7px 5px);
}
.caret.sm { clip-path: polygon(4px 0, 10px 0, 7px 4px); }
.caret.dark { background: #55575c; }
.caret.up { transform: rotate(180deg); clip-path: polygon(4px 0, 10px 0, 7px 4px); }
.caret.left { height: 12px; clip-path: polygon(4px 6px, 10px 0, 10px 12px); }
.caret.bar { height: 11px; clip-path: polygon(2px 0, 12px 0, 12px 2px, 2px 2px, 2px 5px, 12px 5px, 7px 11px, 2px 5px, 2px 2px); }

/* title bar */
.titlebar { display: flex; align-items: center; height: 34px; margin-bottom: 6px; }
.titlebar svg { width: 21px; height: 21px; }
.quick { display: flex; align-items: center; width: 530px; padding-left: 18px; }
.quick button { width: 30px; display: flex; justify-content: center; }
.quick .logo svg { width: 30px; height: 26px; }
.quick > .caret { margin: 0 2px; }
.quick .logo + .caret { margin-right: 5px; }
.quick .redo { color: #5d6470; }
.quick .share { width: auto; gap: 6px; color: #79cdf3; font-size: 16px; margin-left: 2px; }
.doc-title { display: flex; gap: 28px; flex: 1; white-space: nowrap; }
.account { display: flex; align-items: center; gap: 8px; margin-right: 92px; }
.login { display: flex; align-items: center; gap: 6px; }
.account .far { margin-left: 66px; }
.account .caret.sm { margin-right: 2px; }
.vsep { width: 1px; height: 24px; background: #414855; }
.winbtns { display: flex; gap: 42px; padding-right: 20px; }
.winbtns svg { width: 16px; height: 16px; }

.ribbon-tabs { display: flex; height: 24px; padding-left: 4px; }
.ribbon-tabs button { padding: 0 12px; line-height: 24px; }
.ribbon-tabs .on { background: #3c4453; color: #fff; }
.ribbon-tabs .collapse { display: flex; align-items: center; padding-left: 26px; }
.collapse svg { width: 20px; height: 12px; }

/* ribbon */
.ribbon {
  display: grid;
  grid-template-columns: 265fr 283fr 197fr 315fr 217fr 278fr 84fr 96fr 109fr 76fr;
  background: #3c4453; height: 125px; color: #7c8491;
}
.panel { min-width: 0; display: flex; flex-direction: column; justify-content: space-between; border-right: 1px solid #2b323e; border-bottom: 1px solid #4c5463; }
.tools { display: flex; padding-top: 4px; }
.p-draw { padding-left: 4px; }
.p-mod { padding-left: 5px; }
.p-ann { padding-left: 7px; }
.p-lay { padding-left: 2px; }
.p-blk, .p-prop, .p-grp { padding-left: 1px; }
.p-util, .p-clip { padding-left: 7px; }
.p-view { padding-left: 12px; }
.big { width: 50px; flex: none; display: flex; flex-direction: column; align-items: center; align-self: flex-start; padding-top: 4px; }
.big svg { width: 40px; height: 40px; margin-bottom: 6px; }
.big .caret { margin-top: 2px; }
.rows { display: grid; grid-auto-rows: 31px; align-content: start; }
.p-draw .rows { margin-left: 9px; }
.p-mod .rows { width: 75px; }
.p-mod .rows:nth-child(3) { width: 92px; }
.p-mod .rows:last-child { width: 24px; }
.p-ann .rows, .p-util .rows, .p-clip .rows { margin-left: 5px; }
.p-grp .rows { margin-left: 3px; }
.small { display: flex; align-items: center; gap: 6px; }
.small svg, .iconrow svg, .props > svg { width: 24px; height: 22px; }
.small.active { outline: 2px solid #6fb2da; outline-offset: 1px; background: #35506a; align-self: center; height: 24px; }
.p-clip .small { gap: 0; }
.ptitle { display: flex; align-items: center; height: 24px; color: #fff; }
.ptitle button { flex: 1; display: flex; align-items: center; justify-content: center; gap: 6px; }
.ptitle svg { width: 10px; height: 10px; margin-right: 4px; }
.combo { display: flex; align-items: center; height: 26px; background: #4a4f6b; border: 1px solid #2f3542; padding: 0 0 0 6px; min-width: 0; }
.combo.flat { background: #414958; border-color: #414958; }
.combo.flat .caret { background: #8d94a0; }
select { appearance: none; background: none; border: 0; padding: 0; outline: 0; min-width: 0; flex: 1; }
.layer-col { flex: 1; min-width: 0; padding: 4px 4px 0 0; }
.layer { gap: 4px; }
.layer svg { width: 20px; height: 20px; }
.swatch { width: 19px; height: 19px; background: #767d8b; margin-right: 5px; flex: none; }
.layer .swatch { background: #c0c4d2; margin-right: 2px; }
.rule { width: 80px; height: 2px; background: #7c8491; flex: none; }
.iconrow { display: flex; align-items: center; gap: 5px; height: 31px; padding-left: 3px; }
.props { flex: 1; min-width: 0; display: grid; grid-template-columns: 24px 1fr; grid-auto-rows: 31px; gap: 0 2px; align-items: center; padding-right: 4px; }

/* document tabs */
.filetabs, .status { display: flex; align-items: center; color: #dfe2e7; }
.filetabs { height: 33px; padding-left: 19px; border-bottom: 1px solid #171b22; }
.sq svg { width: 22px; height: 22px; }
.slash { width: 12px; height: 24px; margin: 0 9px; }
.filetabs .tab { line-height: 30px; margin-top: 3px; align-self: stretch; }
.filetabs .tab.on { display: flex; align-items: center; gap: 10px; padding: 0 16px 0 20px; margin: 3px 12px 0 9px; width: 93px; background: #3c4453; color: #fff; font-weight: 600; clip-path: polygon(9px 0, 100% 0, 83px 100%, 0 100%); }
.tab.on svg { width: 14px; height: 14px; }

/* drawing area */
.canvas {
  position: relative; flex: 1; min-height: 600px;
  border: solid #3d4553; border-width: 6px 6px 6px 0;
  background-color: #222630;
  background-image:
    linear-gradient(90deg, #303541 1px, transparent 1px),
    linear-gradient(#303541 1px, transparent 1px),
    linear-gradient(90deg, transparent 12px, #262b35 12px 13px, transparent 13px 24px, #262b35 24px 25px, transparent 25px 37px, #262b35 37px 38px, transparent 38px 49px, #262b35 49px 50px, transparent 50px),
    linear-gradient(transparent 12px, #262b35 12px 13px, transparent 13px 24px, #262b35 24px 25px, transparent 25px 37px, #262b35 37px 38px, transparent 38px 49px, #262b35 49px 50px, transparent 50px);
  background-size: 61px 61px;
  background-position: 21px 56px;
}
.vp-label { padding: 4px; }
.hair-h { position: absolute; left: 0; top: 350px; width: 629px; height: 1px; background: #dfe2e7; }
.hair-v { position: absolute; left: 1159px; top: 350px; bottom: 0; width: 1px; background: #c6c8cd; }
.vp-btns { position: absolute; right: 9px; top: 9px; display: flex; gap: 9px; }
.vp-btns svg { width: 16px; height: 16px; }
.viewcube { position: absolute; right: 14px; top: 44px; width: 146px; height: 146px; font: 20px/24px "Noto Sans CJK SC", sans-serif; }
.ring { position: absolute; inset: 8px; border: 14px solid #4a4f5b; border-radius: 50%; }
.viewcube span { position: absolute; color: #c9ccd2; }
.viewcube .n { left: 63px; top: 0; }
.viewcube .s { left: 63px; bottom: 0; }
.viewcube .w { left: 3px; top: 60px; }
.viewcube .e { right: 3px; top: 60px; }
.viewcube .top { position: absolute; left: 45px; top: 45px; width: 56px; height: 56px; background: #b4b6ba; border: 4px solid #bfc1c5; color: #33363c; font-size: 28px; }
.wcs { position: absolute; right: 53px; top: 210px; width: 69px; height: 20px; border-radius: 5px; background: #a5a8b2; color: #6d717c; font-size: 13px; line-height: 20px; }
.navbar { position: absolute; right: 1px; top: 261px; width: 40px; height: 260px; background: #5c6068; border-radius: 4px; }
.ucs { position: absolute; left: 14px; bottom: 10px; width: 92px; height: 94px; }
.cmd { position: absolute; left: 480px; right: 477px; bottom: 0; display: flex; }
.cmd-side { width: 31px; background: #282d38; display: flex; flex-direction: column; align-items: center; gap: 9px; padding-top: 6px; color: #c9ccd1; }
.dots { width: 22px; border-top: 3px dotted #5d626d; }
.cmd-side svg { width: 20px; height: 18px; }
.cmd-body { flex: 1; color: #222; }
.cmd-hist { background: #9b9da0e6; padding: 4px 4px 0; border-bottom: 2px solid #3b3d42; font-family: "Liberation Mono", "Noto Sans CJK SC", monospace; }
.cmd-hist p { line-height: 19px; }
.cmd-in { display: flex; align-items: center; height: 24px; background: #c3c4c8e6; padding: 4px 4px 0; }
.cmd-in svg { width: 21px; height: 18px; }
.cmd-in input { flex: 1; background: none; border: 0; padding: 0; font-family: "Liberation Mono", monospace; }

/* layout tabs and status tray */
.status { height: 35px; padding-left: 19px; }
.status > .tab, .status > .sq, .status > .slash { margin-bottom: 5px; }
.status .tab { line-height: 28px; }
.status .tab.on { width: 72px; margin: 0 9px 5px; background: #3c4453; font-weight: 600; clip-path: polygon(11px 0, 100% 0, 60px 100%, 0 100%); }
.status > .slash + .sq { margin-left: 2px; }
.tray { margin-left: auto; display: flex; gap: 2px; height: 30px; }
.seg { display: flex; align-items: center; background: #3c4453; padding: 0 4px; }
.seg button { width: 30px; height: 30px; display: flex; align-items: center; justify-content: center; }
.seg svg { width: 24px; height: 22px; }
.seg .hl { background: #6692c0; }
.seg .caret { margin: 0 2px; }
.coord { padding: 0 3px 0 71px; }
.seg:has(> button) { padding: 0; }
.snapseg .caret { margin-right: 8px; }
.units { width: 125px; gap: 8px; }
.perf { width: 39px; justify-content: center; }

/* taskbar */
.taskbar { position: relative; display: flex; height: 51px; background: linear-gradient(90deg, #1d1f23, #1d1f23 55%, #20222a 75%, #17191d); padding-left: 11px; }
.start { width: 39px; align-self: flex-start; padding-top: 1px; margin-right: 16px; }
.task { width: 56px; margin-right: 2px; display: flex; align-items: center; justify-content: center; border-bottom: 3px solid #76b9e0; background-clip: padding-box; }
.task.on { width: 62px; background: #484b50; margin: 0 2px; }
.task svg { width: 28px; height: 31px; }
.cam { width: 31px; height: 31px; border-radius: 3px; display: grid; place-items: center; }
.cam svg { width: 28px; height: 28px; }
.green { background: #4fa414; }
.red { background: #e14a42; }
.mark { position: absolute; left: 58px; top: 0; font: 700 36px/46px "Open Sans", sans-serif; color: #ffffff50; }
.systray { margin-left: auto; display: flex; align-items: center; gap: 10px; padding-right: 28px; }
.systray > svg { width: 20px; height: 20px; }
.notes { position: relative; margin-left: 12px; }
.notes svg { width: 24px; height: 24px; }
.notes b { position: absolute; left: 10px; top: 11px; width: 20px; height: 20px; border: 1px solid #9a9ca1; border-radius: 50%; background: #22242af0; font-size: 15px; line-height: 18px; color: #fff; }

/* options dialog */
.dialog { position: absolute; left: 629px; top: 224px; width: 938px; background: #f0f0f0; color: #111; border: 1px solid #fff; box-shadow: 0 0 3px 1px #0b0d12; font-family: "Noto Sans CJK SC", sans-serif; }
tt { font-family: "Liberation Mono", monospace; font-size: 13px; white-space: pre; }
.d-title { display: flex; align-items: center; gap: 7px; height: 35px; background: #fff; padding: 0 11px 0 10px; }
.d-title svg { width: 17px; height: 20px; }
.d-title h1 { flex: 1; margin: 0; font: inherit; }
.d-title button svg { width: 18px; height: 18px; }
.d-body { padding: 4px 16px 8px; }
.d-info { display: grid; grid-template-columns: 143px 351px 29px 150px 1fr; align-items: center; height: 20px; }
.d-info svg { width: 18px; height: 19px; }
.d-tabs { display: flex; margin-top: 7px; }
.d-tabs button { height: 22px; line-height: 20px; padding: 0 5px; text-align: left; border: 1px solid #dcdcdc; border-bottom: 0; border-left: 0; }
.d-tabs button:nth-child(1) { width: 60px; padding-left: 13px; border-left: 1px solid #dcdcdc; }
.d-tabs button:nth-child(2) { width: 60px; }
.d-tabs button:nth-child(5) { width: 59px; }
.d-tabs button:nth-child(6) { width: 101px; }
.d-tabs .on { width: 59px; background: #fff; margin: -2px 0 -1px; height: 25px; }
.d-tabs button:nth-child(9) { width: 57px; }
.d-tabs button:nth-child(10) { width: 60px; }
.d-page { display: grid; grid-template-columns: 1fr 1fr; gap: 16px; background: #fff; border: 1px solid #dcdcdc; padding: 11px 23px 49px 12px; }
.col { display: flex; flex-direction: column; gap: 10px; }
fieldset { margin: 0; padding: 0 15px; border: 1px solid #dcdcdc; min-width: 0; }
legend { padding: 0 4px; margin-left: -10px; line-height: 18px; height: 20px; }
fieldset label { display: block; }
.r28 label { line-height: 26px; height: 28px; }
.r26 label { line-height: 24px; height: 26px; }
.r22 label { line-height: 20px; height: 22px; }
.snapset { padding-bottom: 22px; }
.r26 { padding-top: 10px; padding-bottom: 3px; }
.r22 { padding-top: 3px; padding-bottom: 12px; }
.radios { padding-bottom: 3px; }
.slide { display: flex; align-items: center; gap: 20px; padding: 14px 66px 15px 14px; }
.slide svg { width: 70px; height: 66px; }
input[type=checkbox], input[type=radio] { appearance: none; width: 17px; height: 17px; margin: 0 4px 0 0; border: 1px solid #333; background: #fff; display: inline-block; vertical-align: -3px; }
input[type=checkbox]:checked::before { content: ""; display: block; width: 10px; height: 5px; margin: 4px 0 0 2px; border: solid #333; border-width: 0 0 2px 2px; transform: rotate(-45deg); }
input[type=radio] { border-radius: 50%; }
input[type=radio]:checked::before { content: ""; display: block; width: 9px; height: 9px; margin: 3px; border-radius: 50%; background: #222; }
input[type=range] { appearance: none; flex: 1; min-width: 0; height: 26px; background: none; }
input[type=range]::-webkit-slider-runnable-track { height: 5px; background: #e5e5e5; border: 1px solid #d6d6d6; }
input[type=range]::-webkit-slider-thumb { appearance: none; width: 14px; height: 26px; margin-top: -12px; background: #0a78d7; }
.btn { height: 24px; line-height: 20px; background: #e1e1e1; border: 1px solid #adadad; padding: 0 8px; }
.color { width: 106px; margin-top: 14px; display: block; }
.links { display: flex; flex-direction: column; gap: 18px; margin: 8px 42px 0 0; }
.links .btn { text-align: left; }
.d-foot { display: flex; justify-content: flex-end; gap: 10px; margin-top: 14px; }
.d-foot .btn { width: 98px; }
.d-foot .ok { border: 2px solid #2b62b8; line-height: 18px; }
.d-foot .btn:disabled { background: #c9c9c9; border-color: #bfbfbf; color: #8d8d8d; }

.cursor { position: absolute; left: 1211px; top: 572px; width: 14px; height: 20px; }
.subtitle { position: absolute; left: 0; right: 0; top: 895px; text-align: center; font: 700 55px/70px "Noto Sans CJK SC", sans-serif; color: #fff; -webkit-text-stroke: 8px #000; paint-order: stroke fill; white-space: nowrap; }
```
